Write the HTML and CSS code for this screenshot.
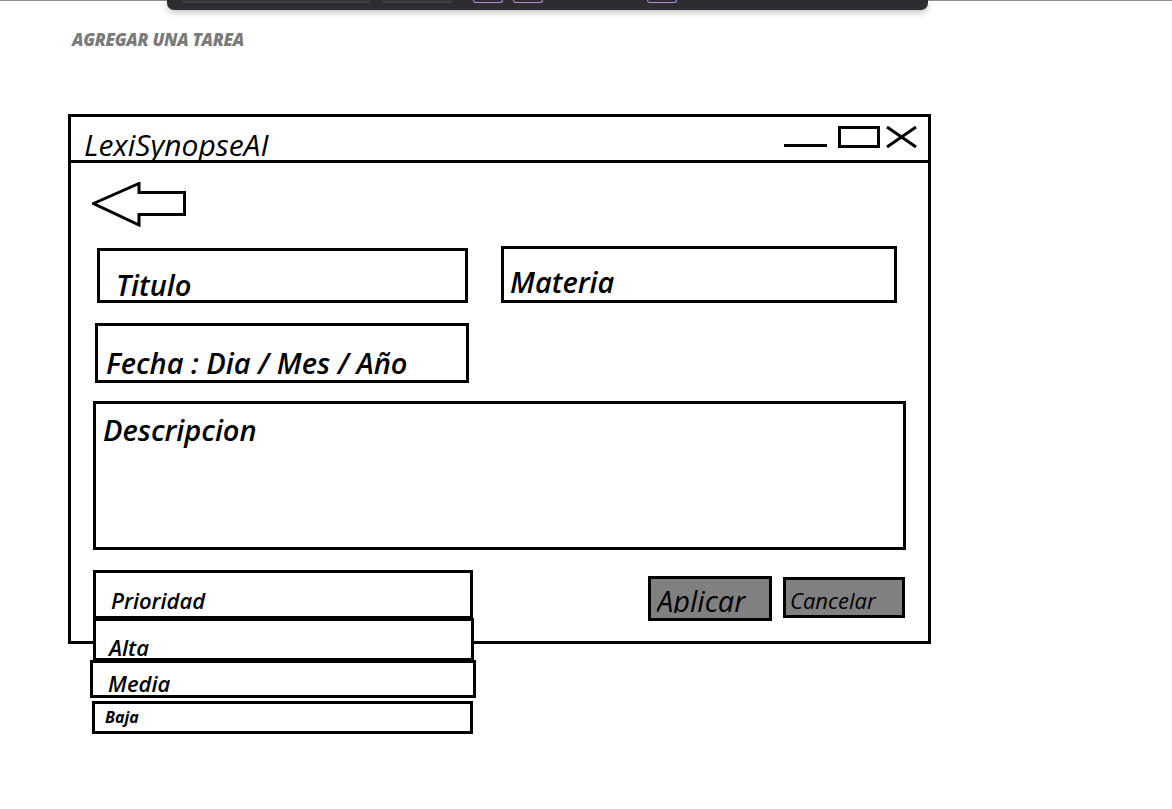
FILE: index.html
```html
<!DOCTYPE html>
<html lang="es">
<head>
<meta charset="utf-8">
<title>Agregar una tarea</title>
<link rel="stylesheet" href="styles.css">
</head>
<body>
<div class="chrome">
  <div class="chrome-bar">
    <span class="slot slot-wide"></span>
    <span class="slot slot-mid"></span>
    <span class="pill pill-a"></span>
    <span class="pill pill-b"></span>
    <span class="pill pill-c"></span>
  </div>
</div>

<h1 class="page-heading">AGREGAR UNA TAREA</h1>

<div class="window">
  <div class="titlebar">
    <div class="title">LexiSynopseAI</div>
    <div class="controls">
      <span class="ctl-min"></span>
      <span class="ctl-max"></span>
      <svg class="ctl-close" width="33" height="22" viewBox="0 0 33 22">
        <path d="M2 1 L31 21 M2 21 L31 1" stroke="#000" stroke-width="3" fill="none"/>
      </svg>
    </div>
  </div>

  <div class="win-body">
    <svg class="back-arrow" width="95" height="45" viewBox="0 0 95 45">
      <polygon points="1.5,21.5 47,1.5 47,10.5 92.5,10.5 92.5,32.5 47,32.5 47,43" fill="#fff" stroke="#000" stroke-width="3" stroke-linejoin="miter"/>
    </svg>

    <div class="row row-one">
      <div class="field field-titulo">Titulo</div>
      <div class="field field-materia">Materia</div>
    </div>

    <div class="field field-fecha">Fecha : Dia / Mes / Año</div>

    <div class="field field-desc">Descripcion</div>

    <div class="row row-bottom">
      <div class="priority">
        <div class="opt opt-head">Prioridad</div>
        <div class="opt opt-alta">Alta</div>
        <div class="opt opt-media">Media</div>
        <div class="opt opt-baja">Baja</div>
      </div>
      <div class="btn btn-apply"><span class="btn-label">Aplicar</span></div>
      <div class="btn btn-cancel">Cancelar</div>
    </div>
  </div>
</div>
</body>
</html>
```

FILE: styles.css
```css
html, body {
  margin: 0;
  padding: 0;
  background: #ffffff;
}

body {
  font-family: "Open Sans", "Noto Sans", sans-serif;
  color: #000;
  width: 1172px;
  height: 809px;
  overflow: hidden;
}

/* top browser chrome remnant */
.chrome {
  height: 10px;
  box-sizing: border-box;
  border-top: 1px solid #8c8c8c;
  display: flex;
}

.chrome-bar {
  margin-left: 167px;
  margin-top: -1px;
  width: 761px;
  height: 10px;
  background: #2c2c31;
  border-radius: 0 0 7px 7px;
  box-shadow: 0 3px 6px rgba(0, 0, 0, 0.22);
  display: flex;
  align-items: flex-start;
}

.slot {
  height: 2px;
  background: #38383e;
  border: 1px solid #46464c;
  border-top: none;
  border-radius: 0 0 4px 4px;
}

.slot-wide { margin-left: 15px; width: 186px; }
.slot-mid { margin-left: 12px; width: 68px; }

.pill {
  height: 2px;
  width: 28px;
  border: 1px solid #b78fd8;
  border-top: none;
  border-radius: 0 0 5px 5px;
}

.pill-a { margin-left: 21px; }
.pill-b { margin-left: 10px; }
.pill-c { margin-left: 104px; }

.page-heading {
  margin: 22px 0 0 72px;
  font-size: 17px;
  line-height: 16px;
  font-weight: 800;
  font-style: italic;
  color: #7b7b7b;
  letter-spacing: -0.3px;
}

/* window frame */
.window {
  margin: 66px 0 0 68px;
  width: 863px;
  height: 530px;
  box-sizing: border-box;
  border: 3px solid #000;
  background: #fff;
}

.titlebar {
  height: 46px;
  box-sizing: border-box;
  border-bottom: 3px solid #000;
  display: flex;
  align-items: flex-end;
  padding: 0 10px 0 13px;
}

.title {
  flex: 1;
  font-size: 30px;
  line-height: 30px;
  font-style: italic;
  font-weight: 500;
}

.controls {
  align-self: flex-start;
  margin-top: 9px;
  display: flex;
  align-items: flex-end;
  height: 22px;
}

.ctl-min {
  width: 43px;
  height: 3px;
  background: #000;
  margin-bottom: 1px;
}

.ctl-max {
  width: 42px;
  height: 22px;
  box-sizing: border-box;
  border: 3px solid #000;
  margin-left: 11px;
}

.ctl-close {
  margin-left: 5px;
  display: block;
}

.win-body {
  padding: 19px 0 0 22px;
}

.back-arrow {
  display: block;
  margin-left: -1px;
}

.row {
  display: flex;
}

.row-one {
  margin-top: 19px;
  align-items: flex-end;
}

.field {
  box-sizing: border-box;
  border: 3px solid #000;
  font-size: 29px;
  line-height: 29px;
  font-style: italic;
  font-weight: 600;
  display: flex;
  align-items: flex-end;
  white-space: nowrap;
}

.field-titulo {
  margin-left: 4px;
  width: 371px;
  height: 55px;
  padding: 0 0 1px 16px;
}

.field-materia {
  margin-left: 33px;
  width: 396px;
  height: 57px;
  padding: 0 0 4px 6px;
}

.field-fecha {
  margin: 20px 0 0 2px;
  width: 374px;
  height: 60px;
  padding: 0 0 3px 8px;
}

.field-desc {
  margin-top: 18px;
  width: 813px;
  height: 149px;
  align-items: flex-start;
  padding: 11px 0 0 7px;
}

.row-bottom {
  margin-top: 20px;
  align-items: flex-start;
}

.priority {
  display: flex;
  flex-direction: column;
  width: 380px;
}

.opt {
  box-sizing: border-box;
  border: 3px solid #000;
  background: #fff;
  font-style: italic;
  font-weight: 600;
  font-size: 22px;
  line-height: 22px;
  display: flex;
  align-items: flex-end;
}

.opt-head {
  height: 49px;
  width: 380px;
  padding: 0 0 5px 15px;
}

.opt-alta {
  margin-top: -1px;
  height: 43px;
  width: 381px;
  padding: 0 0 0 13px;
}

.opt-media {
  margin: -1px 0 0 -3px;
  height: 38px;
  width: 386px;
  padding: 0 0 1px 15px;
}

.opt-baja {
  margin: 3px 0 0 -1px;
  height: 33px;
  width: 381px;
  padding: 0 0 6px 10px;
  font-size: 16px;
  line-height: 16px;
  font-weight: 700;
}

.btn {
  box-sizing: border-box;
  border: 3px solid #000;
  background: #808080;
  font-style: italic;
  display: flex;
  align-items: flex-end;
  overflow: hidden;
  white-space: nowrap;
}

.btn-apply {
  margin: 6px 0 0 175px;
  width: 124px;
  height: 45px;
  align-items: flex-start;
  padding: 7px 0 0 6px;
  font-size: 29px;
  line-height: 29px;
  font-weight: 500;
}

.btn-label {
  display: block;
  height: 27px;
  overflow: hidden;
}

.btn-cancel {
  margin: 7px 0 0 11px;
  width: 122px;
  height: 41px;
  padding: 0 0 4px 4px;
  font-size: 22px;
  line-height: 22px;
  font-weight: 400;
}
```
